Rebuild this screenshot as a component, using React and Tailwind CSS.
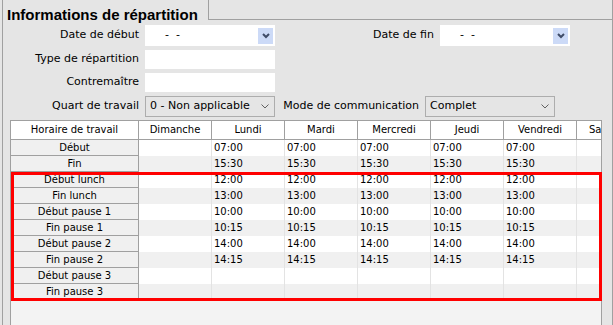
import React from "react";

const days = ["Dimanche", "Lundi", "Mardi", "Mercredi", "Jeudi", "Vendredi", "Samedi"];

const rows = [
  { label: "Début", time: "07:00" },
  { label: "Fin", time: "15:30" },
  { label: "Début lunch", time: "12:00" },
  { label: "Fin lunch", time: "13:00" },
  { label: "Début pause 1", time: "10:00" },
  { label: "Fin pause 1", time: "10:15" },
  { label: "Début pause 2", time: "14:00" },
  { label: "Fin pause 2", time: "14:15" },
  { label: "Début pause 3", time: "" },
  { label: "Fin pause 3", time: "" },
];

function DateField() {
  return (
    <div className="flex h-[21px] w-[130px] items-center justify-between bg-white">
      <span className="whitespace-pre pl-[20px]">{"-  -"}</span>
      <span className="mr-[2px] flex h-[16px] w-[15px] items-center justify-center bg-[#ccdaf7]">
        <svg width="8" height="6" viewBox="0 0 8 6">
          <polyline points="1,1 4,4 7,1" fill="none" stroke="#3f4c68" strokeWidth="2" />
        </svg>
      </span>
    </div>
  );
}

function TextField() {
  return <div className="h-[19px] w-[130px] bg-white" />;
}

function Select({ value }) {
  return (
    <div className="flex h-[21px] w-[130px] items-center justify-between border border-[#adadad] bg-[#e5e5e5]">
      <span className="pl-[4px]">{value}</span>
      <svg className="mr-[5px]" width="8" height="5" viewBox="0 0 8 5">
        <polyline points="0.5,0.5 4,4 7.5,0.5" fill="none" stroke="#606060" strokeWidth="1" />
      </svg>
    </div>
  );
}

export default function App() {
  return (
    <div className="h-[325px] w-[613px] overflow-hidden bg-[#e5e5e5] font-['DejaVu_Sans',sans-serif] text-[11px] text-black">
      <div className="flex h-[20px]">
        <div className="ml-[2px] h-[20px] w-[206px] border-l border-[#a0a0a0] pl-[4px]">
          <p className="pt-[5px] font-['Liberation_Sans',sans-serif] text-[15px] font-bold leading-[20px] whitespace-nowrap">
            Informations de répartition
          </p>
        </div>
        <div className="flex-1 border-b border-l border-r border-[#a0a0a0]" />
      </div>

      <div className="relative ml-[2px] h-[305px] w-[611px] border-l border-r border-[#a0a0a0] pt-[5px]">
        <div className="flex items-center">
          <span className="w-[136px] text-right">Date de début</span>
          <span className="ml-[6px]"><DateField /></span>
          <span className="w-[159px] text-right">Date de fin</span>
          <span className="ml-[6px]"><DateField /></span>
        </div>

        <div className="mt-[4px] flex items-center">
          <span className="w-[136px] text-right">Type de répartition</span>
          <span className="ml-[6px]"><TextField /></span>
        </div>

        <div className="mt-[4px] flex items-center">
          <span className="w-[136px] text-right">Contremaître</span>
          <span className="ml-[6px]"><TextField /></span>
        </div>

        <div className="mt-[4px] flex items-center">
          <span className="w-[136px] text-right">Quart de travail</span>
          <span className="ml-[6px]"><Select value="0 - Non applicable" /></span>
          <span className="w-[144px] text-right">Mode de communication</span>
          <span className="ml-[6px]"><Select value="Complet" /></span>
        </div>

        <div className="ml-[7px] mt-[3px] h-[210px] w-[592px] overflow-hidden border border-[#a0a0a0] bg-[#f3f3f3] text-[10px]">
          <div className="flex h-[19px] border-b border-[#a0a0a0] bg-white">
            <div className="w-[128px] shrink-0 border-r border-[#a0a0a0] text-center leading-[18px]">Horaire de travail</div>
            {days.map((d, j) => (
              <div
                key={d}
                className={`w-[73px] shrink-0 border-r border-[#a0a0a0] leading-[18px] whitespace-nowrap ${
                  j === 6 ? "pl-[12px] text-left" : "text-center"
                }`}
              >
                {d}
              </div>
            ))}
          </div>

          {rows.map((r, i) => (
            <div key={r.label} className={`flex h-[16px] ${i % 2 ? "bg-[#f0f0f0]" : "bg-white"}`}>
              <div className="w-[128px] shrink-0 border-b border-r border-[#a0a0a0] bg-[#f0f0f0] text-center leading-[16px]">
                {r.label}
              </div>
              {days.map((d, j) => (
                <div key={d} className="w-[73px] shrink-0 border-r border-[#e3e3e3] pl-[2px] leading-[16px]">
                  {j >= 1 && j <= 5 ? r.time : ""}
                </div>
              ))}
            </div>
          ))}
        </div>

        <div className="absolute left-[8px] top-[152px] h-[129px] w-[591px] border-[3px] border-[#ff0000]" />
      </div>
    </div>
  );
}
